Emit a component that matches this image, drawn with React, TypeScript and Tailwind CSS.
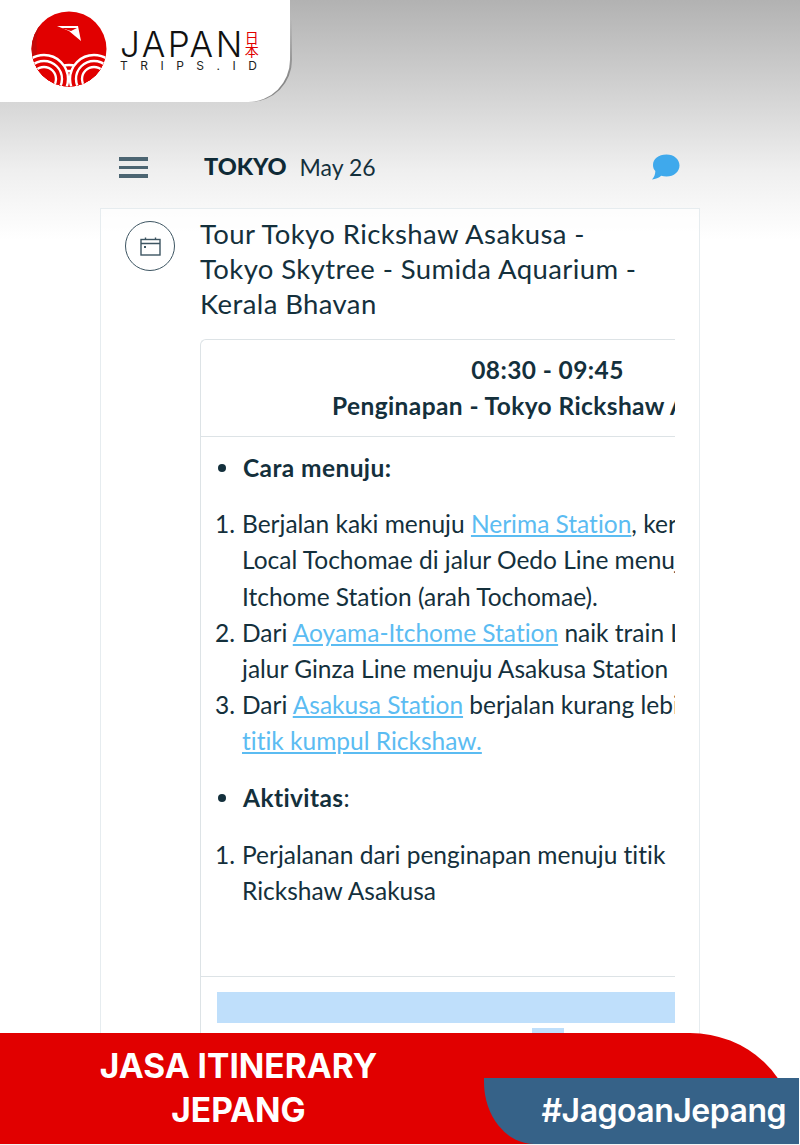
function Logo() {
  return (
    <div className="flex items-start">
      <svg width="76" height="76" viewBox="0 0 76 76" className="shrink-0">
        <defs>
          <clipPath id="sun"><circle cx="38" cy="38" r="37.500" /></clipPath>
        </defs>
        <circle cx="38" cy="38" r="37.500" fill="#e10000" />
        <g clipPath="url(#sun)">
          <path d="M0 38a38 38 0 0 1 12-28a40 40 0 0 0-6 28a40 40 0 0 0 6 28a38 38 0 0 1-12-28Z" fill="#c40808" />
          <g fill="#e10000" stroke="#fff" strokeWidth="2.400">
            <circle cx="38" cy="72" r="18" />
            <circle cx="38" cy="72" r="12" />
            <circle cx="38" cy="72" r="6" />
          </g>
          <g fill="#e10000" stroke="#fff" strokeWidth="2.400">
            <circle cx="13" cy="68" r="24" />
            <circle cx="13" cy="68" r="18" />
            <circle cx="13" cy="68" r="12" />
            <circle cx="63" cy="68" r="24" />
            <circle cx="63" cy="68" r="18" />
            <circle cx="63" cy="68" r="12" />
          </g>
        </g>
        <path d="M26 15 L47 15 L50 30 L38 20 Z" fill="#fff" />
        <path d="M30 17 L46 17 L40 20 Z" fill="#e10000" />
      </svg>
      <div className="ml-[13px] mt-[20px] flex flex-col font-['Inter',sans-serif]">
        <div className="flex items-start">
          <span className="text-[35px] leading-[26px] font-light tracking-[2.500px] text-[#111]">JAPAN</span>
          <span className="flex flex-col text-[14px] leading-[13px] text-[#e10000] font-['Noto_Sans_CJK_JP',sans-serif]">
            <span>日</span>
            <span>本</span>
          </span>
        </div>
        <span className="mt-[3px] text-[12px] leading-[12px] tracking-[12.500px] text-[#222] whitespace-nowrap">TRIPS.ID</span>
      </div>
    </div>
  );
}

function StepRow({ n, children }: { n: string; children: React.ReactNode }) {
  return (
    <div className="flex">
      <span className="w-[41px] shrink-0 pl-[14px]">{n}</span>
      <div className="whitespace-nowrap">{children}</div>
    </div>
  );
}

function Bullet({ children }: { children: React.ReactNode }) {
  return (
    <div className="flex items-center">
      <span className="ml-[17px] mr-[17px] h-[8px] w-[8px] rounded-full bg-[#14303c]" />
      <span className="tracking-[0.400px]">{children}</span>
    </div>
  );
}

function A({ children }: { children: React.ReactNode }) {
  return <span className="text-[#5bbcf2] underline">{children}</span>;
}

export default function App() {
  return (
    <div className="relative flex h-[1145px] w-[800px] flex-col overflow-hidden bg-white font-['Lato',sans-serif] text-[#14303c] [font-variant-ligatures:none]">
      {/* top fade */}
      <div className="h-[244px] bg-[linear-gradient(to_bottom,#b2b2b2_0px,#d9d9d9_110px,#efefef_170px,#ffffff_240px)]">
        <div className="relative h-[102px] w-[290px]">
          <div className="absolute -right-[2px] top-0 h-[102px] w-[120px] rounded-br-[42px] bg-[linear-gradient(135deg,transparent_62%,#666_100%)]" />
          <div className="relative flex h-[102px] w-[290px] rounded-br-[42px] bg-white pl-[31px] pt-[11px]">
            <Logo />
          </div>
        </div>
        <div className="mt-[38px] flex h-[54px] items-center pl-[119px] pr-[120px]">
          <div className="flex w-[29px] flex-col gap-[5px]">
            <span className="h-[4px] bg-[#4c6572]" />
            <span className="h-[3px] bg-[#4c6572]" />
            <span className="h-[4px] bg-[#4c6572]" />
          </div>
          <span className="ml-[56px] text-[23.500px] font-black text-[#0f2a36]">TOKYO</span>
          <span className="ml-[13px] text-[23px]">May 26</span>
          <svg width="29" height="26" viewBox="0 0 29 26" className="ml-auto">
            <path d="M15.500 0.500C7.500 0.500 2 5 2 11c0 2.500.8 4.500 2.300 6C4.500 20 3 23.500 1 25.500c3.500-.3 6.800-1.800 9.200-3.800 1.600.5 3.400.8 5.300.8 7.500 0 13-4.800 13-11S23 .5 15.500.5Z" fill="#3fa9ec" />
          </svg>
        </div>
      </div>

      {/* itinerary card */}
      <div className="absolute left-[100px] top-[208px] h-[900px] w-[600px] border border-[#e6ecef] bg-white/70">
        <div className="flex pl-[24px] pt-[7px]">
          <div className="mt-[5px] flex h-[50px] w-[50px] items-center justify-center rounded-full border-[1.500px] border-[#3d5562]">
            <svg width="21" height="19" viewBox="0 0 21 19" fill="none" stroke="#3d5562" strokeWidth="1.400">
              <rect x="1" y="2.500" width="19" height="15.500" />
              <path d="M1 6.500H20M5.500 0.500V2.500M15.500 0.500V2.500" />
              <rect x="4" y="9" width="2" height="2" fill="#3d5562" stroke="none" />
            </svg>
          </div>
          <div className="ml-[25px] text-[27.500px] leading-[35px] tracking-[0.400px]">
            Tour Tokyo Rickshaw Asakusa -<br />
            Tokyo Skytree - Sumida Aquarium -<br />
            Kerala Bhavan
          </div>
        </div>
        <div className="ml-[99px] mt-[18px] w-[475px] overflow-hidden rounded-tl-[6px] border-l border-t border-[#dde3e6] bg-white">
          <div className="h-[97px] border-b border-[#dde3e6] pt-[12px]">
            <div className="w-[693px] whitespace-nowrap text-center text-[24.500px] font-bold leading-[36px] tracking-[0.400px]">
              <div>08:30 - 09:45</div>
              <div>Penginapan - Tokyo Rickshaw Asakusa</div>
            </div>
          </div>
          <div className="h-[540px] border-b border-[#dde3e6] pt-[13px] text-[24.500px] leading-[36.200px]">
            <Bullet><b>Cara menuju:</b></Bullet>
            <div className="mt-[20px]">
              <StepRow n="1.">Berjalan kaki menuju <A>Nerima Station</A>, kereta<br />Local Tochomae di jalur Oedo Line menuju<br />Itchome Station (arah Tochomae).</StepRow>
              <StepRow n="2.">Dari <A>Aoyama-Itchome Station</A> naik train Line<br />jalur Ginza Line menuju Asakusa Station</StepRow>
              <StepRow n="3.">Dari <A>Asakusa Station</A> berjalan kurang lebih<br /><A>titik kumpul Rickshaw.</A></StepRow>
            </div>
            <div className="mt-[20px]"><Bullet><span><b>Aktivitas</b>:</span></Bullet></div>
            <div className="mt-[21px]">
              <StepRow n="1.">Perjalanan dari penginapan menuju titik<br />Rickshaw Asakusa</StepRow>
            </div>
          </div>
          <div className="pl-[16px] pt-[15px]">
            <div className="h-[31px] bg-[#bfdffb]" />
            <div className="ml-[315px] mt-[5px] h-[20px] w-[32px] bg-[#bfdffb]" />
          </div>
        </div>
      </div>

      {/* bottom banner */}
      <div className="absolute bottom-0 left-0 h-[112px] w-[800px] border-b border-[#f3f3f3]">
        <div className="h-full w-[795px] rounded-tr-[105px_100px] bg-[#e10000] pt-[11px] font-['Inter',sans-serif] text-white">
          <div className="w-[477px] text-center text-[33.500px] font-bold leading-[44px]">JASA ITINERARY<br />JEPANG</div>
        </div>
        <div className="absolute bottom-0 right-[1px] flex h-[66px] w-[315px] items-center justify-end rounded-bl-[50px_62px] bg-[#366288] pr-[13px] font-['Inter',sans-serif] text-[32px] font-semibold tracking-[-0.500px] text-white">
          #JagoanJepang
        </div>
      </div>
    </div>
  );
}
